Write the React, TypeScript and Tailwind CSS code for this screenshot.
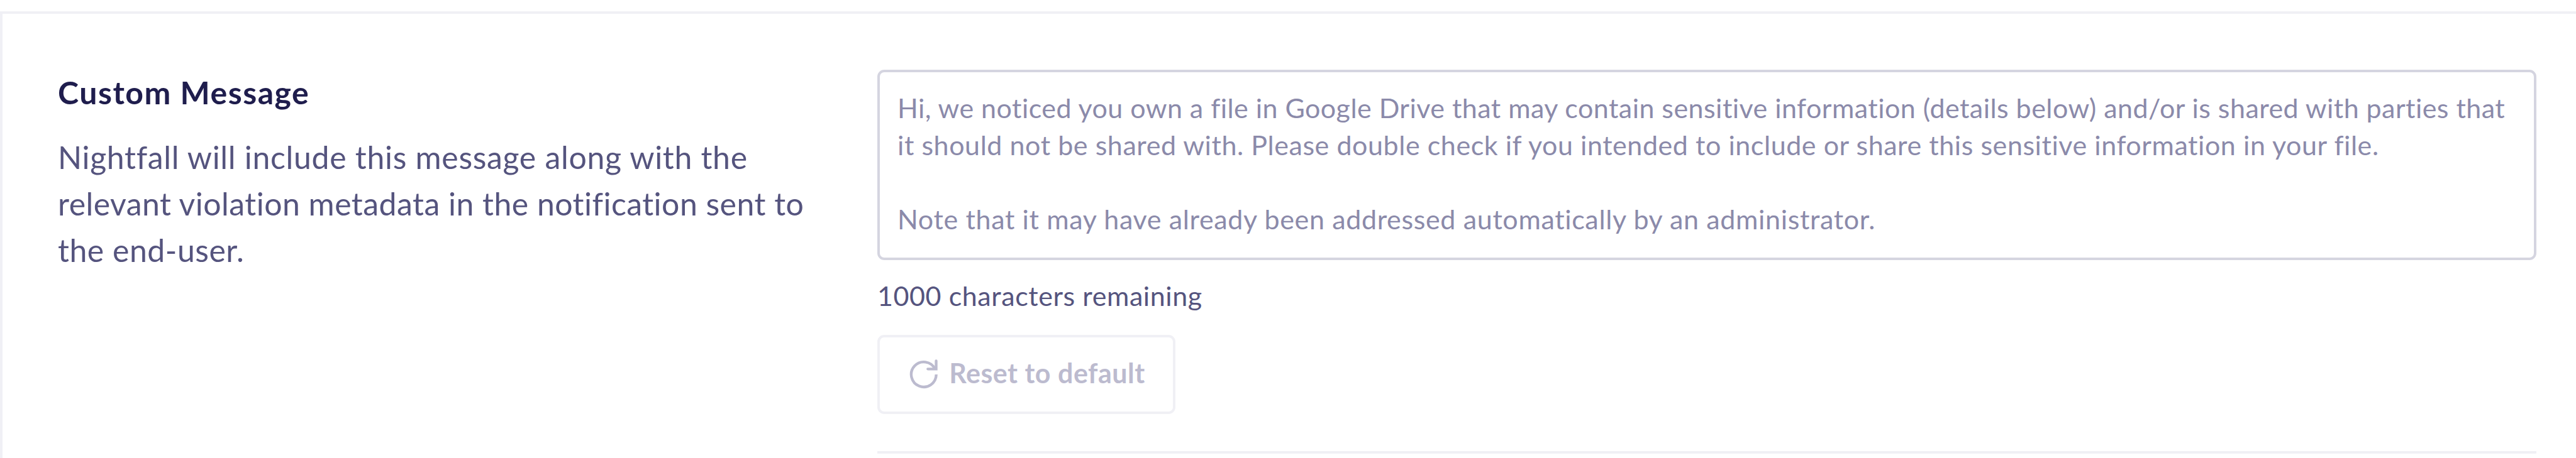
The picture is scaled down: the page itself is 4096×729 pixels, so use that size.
function ResetIcon() {
  return (
    <svg
      viewBox="70 50 150 160"
      className="mt-[4px] h-[49.3px] w-[46.25px] shrink-0"
      fill="none"
      stroke="currentColor"
      strokeWidth="14"
      aria-hidden="true"
    >
      <path d="M208.500 131A64.500 64.500 0 1 1 202 103" />
      <path d="M208 61V103H165" strokeLinecap="round" />
    </svg>
  );
}

function Description() {
  return (
    <div className="w-[1391px] shrink-0 pl-[88px] pt-[88px]">
      <h2 className="text-[50px] font-bold leading-[74px] tracking-[1.5px] text-[#1f1d4d]">
        Custom Message
      </h2>
      <p className="mt-[29px] whitespace-nowrap text-[50px] leading-[74px] text-[#55547e]">
        <span className="block tracking-[0.68px]">Nightfall will include this message along with the</span>
        <span className="block tracking-[0.46px]">relevant violation metadata in the notification sent to</span>
        <span className="block tracking-[0.5px]">the end-user.</span>
      </p>
    </div>
  );
}

function MessageBox() {
  return (
    <div className="h-[303px] w-full whitespace-nowrap rounded-[11px] border-4 border-[#d5d5e0] pl-[28px] pt-[26.5px] text-[43px] leading-[59.2px] text-[#8b8aaa]">
      <p>
        <span className="block tracking-[0.46px]">
          Hi, we noticed you own a file in Google Drive that may contain sensitive information (details below) and/or is shared with parties that
        </span>
        <span className="block tracking-[0.56px]">
          it should not be shared with. Please double check if you intended to include or share this sensitive information in your file.
        </span>
      </p>
      <p className="mt-[59.2px] tracking-[0.65px]">
        Note that it may have already been addressed automatically by an administrator.
      </p>
    </div>
  );
}

export default function App() {
  return (
    <div className="h-[729px] w-[4096px] overflow-hidden bg-white pt-[18px] font-['Lato','Open_Sans',sans-serif]">
      <section className="flex h-[711px] border-l-4 border-t-4 border-[#f0f0f5]">
        <Description />
        <div className="flex w-[2638px] shrink-0 flex-col items-start pt-[89px]">
          <MessageBox />
          <p className="mt-[27px] text-[43px] leading-[59px] tracking-[0.58px] text-[#55547e]">
            1000 characters remaining
          </p>
          <button
            type="button"
            disabled
            className="mt-[33px] flex h-[126px] w-[474px] items-center gap-[17px] rounded-[11px] border-4 border-[#f0f0f5] pb-[5px] pl-[47px] text-[43px] font-bold leading-[59px] tracking-[0.5px] text-[#bcbbcf]"
          >
            <ResetIcon />
            <span className="whitespace-nowrap">Reset to default</span>
          </button>
          <hr className="mt-[59px] w-full border-0 border-t-4 border-[#f0f0f5]" />
        </div>
      </section>
    </div>
  );
}
